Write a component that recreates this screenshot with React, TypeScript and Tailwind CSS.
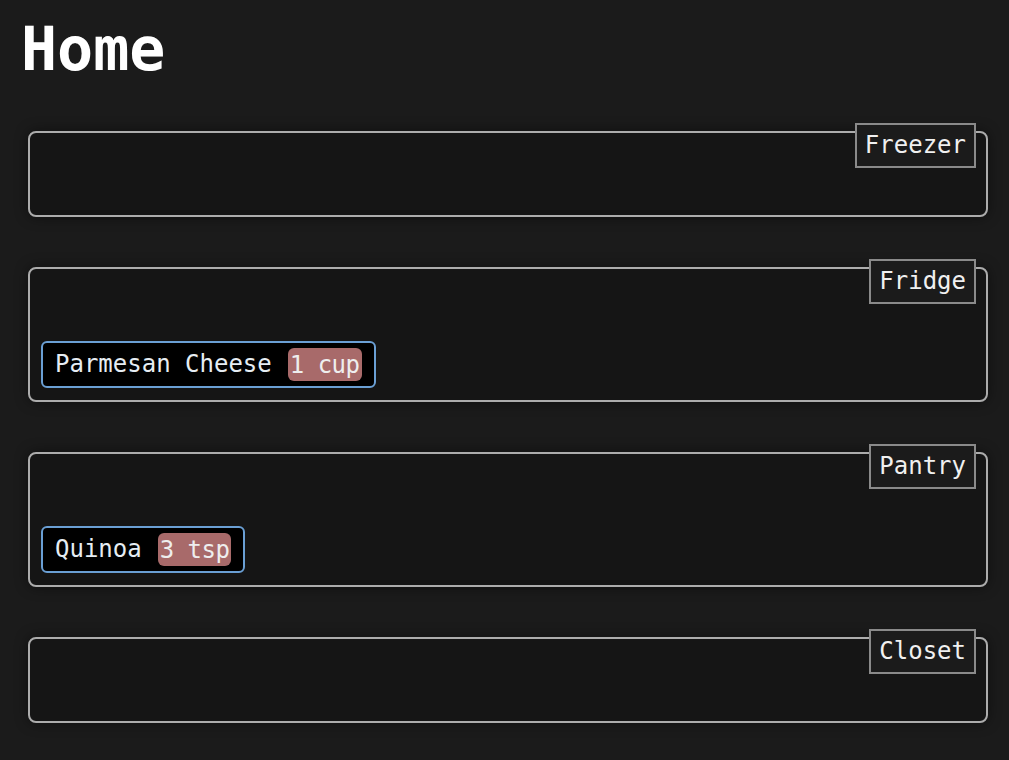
import React from "react";

type Item = { name: string; qty: string };
type Loc = { name: string; items: Item[] };

const locations: Loc[] = [
  { name: "Freezer", items: [] },
  { name: "Fridge", items: [{ name: "Parmesan Cheese", qty: "1 cup" }] },
  { name: "Pantry", items: [{ name: "Quinoa", qty: "3 tsp" }] },
  { name: "Closet", items: [] },
];

const mono = "font-['DejaVu_Sans_Mono','Liberation_Mono',monospace]";

function Card({ loc }: { loc: Loc }) {
  const empty = loc.items.length === 0;
  return (
    <div
      className={`relative ml-[7px] w-[960px] rounded-[8px] border-2 border-[#acacac] bg-[#151515] shadow-[0_0_14px_rgba(0,0,0,0.45)] ${
        empty ? "h-[86px]" : "px-[11px] pt-[72px] pb-[12px]"
      }`}
    >
      <div
        className={`absolute -top-[10px] right-[10px] border-2 border-[#8a8a8a] bg-[#1b1b1b] px-[8px] py-[5px] text-[24px] leading-[31px] text-[#f0f0f0] ${mono}`}
      >
        {loc.name}
      </div>
      {!empty && (
        <div className="flex flex-wrap gap-2">
          {loc.items.map((it) => (
            <div
              key={it.name}
              className="flex items-center gap-[16px] rounded-[6px] border-2 border-[#6a9fd4] bg-black py-[5px] pl-[12px] pr-[12px]"
            >
              <span className={`text-[24px] leading-[31px] text-[#e6edf3] ${mono}`}>{it.name}</span>
              <span
                className={`flex h-[33px] items-center rounded-[6px] bg-[#a86a6a] px-[2px] text-[24px] tracking-[-0.5px] text-[#eeeeee] ${mono}`}
              >
                {it.qty}
              </span>
            </div>
          ))}
        </div>
      )}
    </div>
  );
}

export default function App() {
  return (
    <div className="min-h-[760px] w-full bg-[#1b1b1b] px-[21px] pt-[14px] pb-[36px]">
      <h1 className={`text-[60px] font-bold leading-[70px] text-white ${mono}`}>Home</h1>
      <div className="mt-[47px] flex flex-col gap-[50px]">
        {locations.map((l) => (
          <Card key={l.name} loc={l} />
        ))}
      </div>
    </div>
  );
}
